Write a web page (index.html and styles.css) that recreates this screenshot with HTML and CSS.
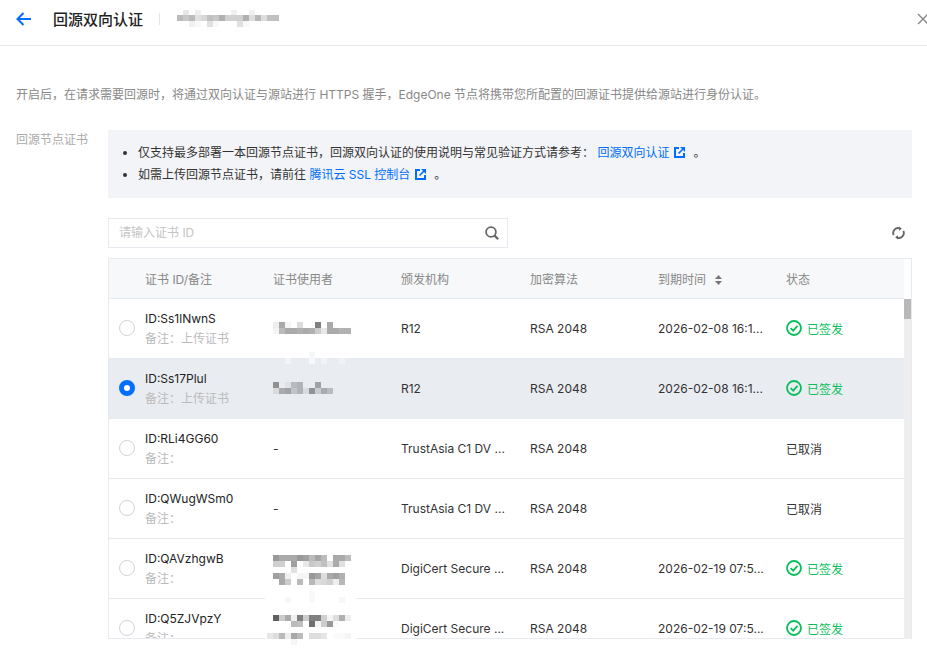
FILE: index.html
```html
<!DOCTYPE html>
<html lang="zh-CN">
<head>
  <meta charset="UTF-8" />
  <meta name="viewport" content="width=device-width, initial-scale=1" />
  <title>回源双向认证</title>
  <link rel="stylesheet" href="styles.css">
</head>
<body>

  <header class="top-bar">
    <svg class="back-icon" width="16" height="14" viewBox="0 0 16 14" fill="none" stroke="#006eff" stroke-width="2">
      <path d="M15 7H2M7.5 1 1.5 7l6 6"/>
    </svg>
    <h1 class="page-title">回源双向认证</h1>
    <span class="title-divider"></span>
    <!-- 打码的域名 -->
    <svg class="title-mosaic" width="102" height="18" viewBox="0 0 102 18" shape-rendering="crispEdges">
      <rect x="6" y="0" width="6" height="6" fill="#e8e8e8"/><rect x="18" y="0" width="6" height="6" fill="#eee"/><rect x="54" y="0" width="6" height="6" fill="#f0f0f0"/><rect x="72" y="0" width="6" height="6" fill="#f0f0f0"/>
      <rect x="0" y="5" width="6" height="6" fill="#bbb"/><rect x="6" y="5" width="6" height="6" fill="#c8c8c8"/><rect x="12" y="5" width="6" height="6" fill="#bbb"/><rect x="18" y="5" width="6" height="6" fill="#e0e0e0"/><rect x="24" y="5" width="6" height="6" fill="#d8d8d8"/><rect x="30" y="5" width="6" height="6" fill="#c0c0c0"/><rect x="36" y="5" width="6" height="6" fill="#c8c8c8"/><rect x="42" y="5" width="6" height="6" fill="#b0b0b0"/><rect x="48" y="5" width="18" height="6" fill="#d0d0d0"/><rect x="66" y="5" width="6" height="6" fill="#b0b0b0"/><rect x="72" y="5" width="6" height="6" fill="#ddd"/><rect x="78" y="5" width="6" height="6" fill="#b8b8b8"/><rect x="84" y="5" width="6" height="6" fill="#ddd"/><rect x="90" y="5" width="12" height="6" fill="#c0c0c0"/>
      <rect x="12" y="11" width="6" height="6" fill="#f0f0f0"/><rect x="18" y="11" width="6" height="6" fill="#f8f8f8"/><rect x="30" y="11" width="6" height="6" fill="#e0e0e0"/><rect x="36" y="11" width="6" height="6" fill="#f8f8f8"/><rect x="60" y="11" width="6" height="6" fill="#e0e0e0"/><rect x="66" y="11" width="6" height="6" fill="#f8f8f8"/>
    </svg>
    <svg class="close-icon" width="12" height="12" viewBox="0 0 12 12" fill="none" stroke="#888" stroke-width="1.4">
      <path d="M1 1l10 10M11 1 1 11"/>
    </svg>
  </header>

  <main class="content">
    <p class="intro">开启后，在请求需要回源时，将通过双向认证与源站进行 HTTPS 握手，EdgeOne 节点将携带您所配置的回源证书提供给源站进行身份认证。</p>

    <div class="form-row">
      <label class="form-label">回源节点证书</label>
      <div class="form-body">

        <ul class="notice">
          <li>仅支持最多部署一本回源节点证书，回源双向认证的使用说明与常见验证方式请参考：
            <a class="link" href="#">回源双向认证<svg class="ext-icon" width="11" height="11" viewBox="0 0 11 11" fill="none" stroke="#006eff" stroke-width="2"><path d="M5 1H1v9h9V6"/><path d="M4.5 6.5 9 2" stroke-width="1.6"/><path d="M6 0h5v5z" fill="#006eff" stroke="none"/></svg></a><span class="after-link">。</span></li>
          <li>如需上传回源节点证书，请前往
            <a class="link" href="#">腾讯云 SSL 控制台<svg class="ext-icon" width="11" height="11" viewBox="0 0 11 11" fill="none" stroke="#006eff" stroke-width="2"><path d="M5 1H1v9h9V6"/><path d="M4.5 6.5 9 2" stroke-width="1.6"/><path d="M6 0h5v5z" fill="#006eff" stroke="none"/></svg></a><span class="after-link">。</span></li>
        </ul>

        <div class="toolbar">
          <div class="search-box">
            <input class="search-input" type="text" placeholder="请输入证书 ID" />
            <svg width="14" height="14" viewBox="0 0 14 14" fill="none" stroke="#666" stroke-width="1.8">
              <circle cx="6" cy="6" r="4.9"/><path d="M9.6 9.6 13.2 13.2" stroke-width="2.2"/>
            </svg>
          </div>
          <svg class="refresh-icon" width="13" height="14" viewBox="0 0 14 14" fill="none" stroke="#666" stroke-width="2">
            <path d="M1.8 9.2A5.3 5.3 0 0 1 8.4 2"/><path d="M12.2 4.8A5.3 5.3 0 0 1 5.6 12"/>
            <path d="M7.6 0l3 2.3-3 2.3z" fill="#666" stroke="none"/><path d="M6.4 14l-3-2.3 3-2.3z" fill="#666" stroke="none"/>
          </svg>
        </div>

        <div class="cert-table">
          <div class="cert-scroll">
            <table>
              <colgroup>
                <col class="col-radio"><col class="col-id"><col class="col-user"><col class="col-issuer"><col class="col-algo"><col class="col-date"><col class="col-status">
              </colgroup>
              <thead>
                <tr>
                  <th></th>
                  <th>证书 ID/备注</th>
                  <th>证书使用者</th>
                  <th>颁发机构</th>
                  <th>加密算法</th>
                  <th>到期时间<svg class="sort-icon" width="7" height="10" viewBox="0 0 7 10" fill="#777"><path d="M3.5 0 7 4H0zM3.5 10 0 6h7z"/></svg></th>
                  <th>状态</th>
                </tr>
              </thead>
              <tbody>
                <tr>
                  <td><span class="radio"></span></td>
                  <td><div class="cert-id">ID:Ss1lNwnS</div><div class="cert-note">备注：上传证书</div></td>
                  <td></td>
                  <td>R12</td>
                  <td>RSA 2048</td>
                  <td>2026-02-08 16:1...</td>
                  <td><span class="status-ok"><svg width="16" height="16" viewBox="0 0 16 16" fill="none" stroke="#0abf5b" stroke-width="1.8"><circle cx="8" cy="8" r="7"/><path d="M4.6 8.1 7.2 10.6 11.5 5.8"/></svg>已签发</span></td>
                </tr>
                <tr class="selected">
                  <td><span class="radio checked"></span></td>
                  <td><div class="cert-id">ID:Ss17Plul</div><div class="cert-note">备注：上传证书</div></td>
                  <td></td>
                  <td>R12</td>
                  <td>RSA 2048</td>
                  <td>2026-02-08 16:1...</td>
                  <td><span class="status-ok"><svg width="16" height="16" viewBox="0 0 16 16" fill="none" stroke="#0abf5b" stroke-width="1.8"><circle cx="8" cy="8" r="7"/><path d="M4.6 8.1 7.2 10.6 11.5 5.8"/></svg>已签发</span></td>
                </tr>
                <tr>
                  <td><span class="radio"></span></td>
                  <td><div class="cert-id">ID:RLi4GG60</div><div class="cert-note">备注：</div></td>
                  <td>-</td>
                  <td>TrustAsia C1 DV ...</td>
                  <td>RSA 2048</td>
                  <td></td>
                  <td>已取消</td>
                </tr>
                <tr>
                  <td><span class="radio"></span></td>
                  <td><div class="cert-id">ID:QWugWSm0</div><div class="cert-note">备注：</div></td>
                  <td>-</td>
                  <td>TrustAsia C1 DV ...</td>
                  <td>RSA 2048</td>
                  <td></td>
                  <td>已取消</td>
                </tr>
                <tr>
                  <td><span class="radio"></span></td>
                  <td><div class="cert-id">ID:QAVzhgwB</div><div class="cert-note">备注：</div></td>
                  <td></td>
                  <td>DigiCert Secure ...</td>
                  <td>RSA 2048</td>
                  <td>2026-02-19 07:5...</td>
                  <td><span class="status-ok"><svg width="16" height="16" viewBox="0 0 16 16" fill="none" stroke="#0abf5b" stroke-width="1.8"><circle cx="8" cy="8" r="7"/><path d="M4.6 8.1 7.2 10.6 11.5 5.8"/></svg>已签发</span></td>
                </tr>
                <tr>
                  <td><span class="radio"></span></td>
                  <td><div class="cert-id">ID:Q5ZJVpzY</div><div class="cert-note">备注：</div></td>
                  <td></td>
                  <td>DigiCert Secure ...</td>
                  <td>RSA 2048</td>
                  <td>2026-02-19 07:5...</td>
                  <td><span class="status-ok"><svg width="16" height="16" viewBox="0 0 16 16" fill="none" stroke="#0abf5b" stroke-width="1.8"><circle cx="8" cy="8" r="7"/><path d="M4.6 8.1 7.2 10.6 11.5 5.8"/></svg>已签发</span></td>
                </tr>
              </tbody>
            </table>
          </div>
          <div class="scrollbar"><div class="scrollbar-thumb"></div></div>

          <!-- 证书使用者一列的打码，盖在表格上面。x = 页面x - 265, y = 页面y - 300 -->
          <svg class="user-mosaic" width="92" height="350" viewBox="0 0 92 350" shape-rendering="crispEdges">
            <g>
              <rect x="8" y="22" width="6" height="6" fill="#eee"/><rect x="14" y="22" width="6" height="6" fill="#aaa"/><rect x="20" y="22" width="6" height="6" fill="#f5f5f5"/><rect x="32" y="22" width="6" height="6" fill="#ddd"/><rect x="50" y="22" width="6" height="6" fill="#808080"/><rect x="62" y="22" width="6" height="6" fill="#aaa"/>
              <rect x="8" y="28" width="6" height="6" fill="#f5f5f5"/><rect x="14" y="28" width="6" height="6" fill="#bbb"/><rect x="20" y="28" width="12" height="6" fill="#aaa"/><rect x="32" y="28" width="6" height="6" fill="#b0b0b0"/><rect x="38" y="28" width="6" height="6" fill="#aaa"/><rect x="44" y="28" width="6" height="6" fill="#b0b0b0"/><rect x="50" y="28" width="6" height="6" fill="#ccc"/><rect x="56" y="28" width="6" height="6" fill="#e8e8e8"/><rect x="62" y="28" width="12" height="6" fill="#aaa"/><rect x="74" y="28" width="12" height="6" fill="#b2b2b2"/>
            </g>
            <g>
              <rect x="44" y="52" width="6" height="12" fill="#f6f7f9"/><rect x="20" y="58" width="6" height="6" fill="#f4f5f8"/><rect x="56" y="58" width="6" height="6" fill="#f0f2f5"/><rect x="74" y="58" width="6" height="6" fill="#f0f2f5"/>
              <rect x="8" y="82" width="6" height="6" fill="#909090"/><rect x="20" y="82" width="6" height="6" fill="#dfe1e6"/><rect x="26" y="82" width="6" height="6" fill="#b8bcc0"/><rect x="32" y="82" width="6" height="6" fill="#b0b3b8"/><rect x="50" y="82" width="6" height="6" fill="#a0a0a5"/>
              <rect x="8" y="88" width="6" height="6" fill="#d8dade"/><rect x="14" y="88" width="6" height="6" fill="#a8abb0"/><rect x="20" y="88" width="6" height="6" fill="#a0a3a8"/><rect x="26" y="88" width="6" height="6" fill="#c0c3c8"/><rect x="32" y="88" width="6" height="6" fill="#b0b3b8"/><rect x="38" y="88" width="6" height="6" fill="#d8dade"/><rect x="44" y="88" width="6" height="6" fill="#90939a"/><rect x="50" y="88" width="6" height="6" fill="#c8cbd0"/><rect x="56" y="88" width="6" height="6" fill="#a8abb0"/><rect x="62" y="88" width="6" height="6" fill="#b8bbc0"/>
            </g>
            <g>
              <rect x="8" y="255" width="6" height="6" fill="#999"/><rect x="14" y="255" width="18" height="6" fill="#aaa"/><rect x="32" y="255" width="6" height="6" fill="#999"/><rect x="38" y="255" width="6" height="6" fill="#a0a0a0"/><rect x="44" y="255" width="6" height="6" fill="#bbb"/><rect x="50" y="255" width="6" height="6" fill="#a5a5a5"/><rect x="56" y="255" width="6" height="6" fill="#bbb"/><rect x="68" y="255" width="12" height="6" fill="#aaa"/><rect x="80" y="255" width="6" height="6" fill="#bbb"/>
              <rect x="8" y="261" width="12" height="6" fill="#d0d0d0"/><rect x="26" y="261" width="6" height="6" fill="#a0a0a0"/><rect x="38" y="261" width="6" height="6" fill="#e8e8e8"/><rect x="44" y="261" width="6" height="6" fill="#c8c8c8"/><rect x="50" y="261" width="6" height="6" fill="#d0d0d0"/><rect x="56" y="261" width="6" height="6" fill="#c0c0c0"/><rect x="62" y="261" width="6" height="6" fill="#e0e0e0"/><rect x="68" y="261" width="6" height="6" fill="#aaa"/><rect x="74" y="261" width="6" height="6" fill="#e0e0e0"/>
              <rect x="26" y="267" width="6" height="6" fill="#e0e0e0"/>
              <rect x="8" y="273" width="6" height="6" fill="#a0a0a0"/><rect x="14" y="273" width="6" height="6" fill="#aaa"/><rect x="20" y="273" width="6" height="6" fill="#f0f0f0"/><rect x="32" y="273" width="12" height="6" fill="#f6f6f6"/><rect x="44" y="273" width="6" height="6" fill="#999"/><rect x="50" y="273" width="6" height="6" fill="#a5a5a5"/><rect x="56" y="273" width="6" height="6" fill="#ddd"/><rect x="62" y="273" width="6" height="6" fill="#aaa"/><rect x="68" y="273" width="6" height="6" fill="#a0a0a0"/><rect x="74" y="273" width="6" height="6" fill="#b0b0b0"/>
              <rect x="14" y="279" width="6" height="6" fill="#aaa"/><rect x="20" y="279" width="6" height="6" fill="#ccc"/><rect x="32" y="279" width="6" height="6" fill="#bbb"/><rect x="44" y="279" width="6" height="6" fill="#b8b8b8"/><rect x="50" y="279" width="6" height="6" fill="#ddd"/><rect x="56" y="279" width="6" height="6" fill="#d8d8d8"/><rect x="62" y="279" width="6" height="6" fill="#d0d0d0"/><rect x="68" y="279" width="6" height="6" fill="#eee"/><rect x="74" y="279" width="6" height="6" fill="#b8b8b8"/>
            </g>
            <g>
              <rect x="0" y="297" width="91" height="6" fill="#fff"/><rect x="44" y="291" width="6" height="12" fill="#f8f9fb"/><rect x="20" y="297" width="6" height="6" fill="#f6f7f9"/><rect x="74" y="297" width="6" height="6" fill="#f6f7f9"/>
              <rect x="8" y="315" width="6" height="6" fill="#606060"/><rect x="14" y="315" width="6" height="6" fill="#ccc"/><rect x="20" y="315" width="6" height="6" fill="#aaa"/><rect x="26" y="315" width="6" height="6" fill="#f0f0f0"/><rect x="32" y="315" width="6" height="6" fill="#808080"/><rect x="38" y="315" width="6" height="6" fill="#ccc"/><rect x="44" y="315" width="12" height="6" fill="#808080"/><rect x="56" y="315" width="6" height="6" fill="#d0d0d0"/><rect x="62" y="315" width="6" height="6" fill="#f5f5f5"/><rect x="68" y="315" width="6" height="6" fill="#ddd"/><rect x="74" y="315" width="6" height="6" fill="#b0b0b0"/><rect x="80" y="315" width="6" height="6" fill="#eee"/>
              <rect x="26" y="321" width="6" height="6" fill="#bbb"/><rect x="32" y="321" width="6" height="6" fill="#c0c0c0"/><rect x="44" y="321" width="6" height="6" fill="#707070"/><rect x="50" y="321" width="6" height="6" fill="#f5f5f5"/><rect x="56" y="321" width="6" height="6" fill="#ccc"/><rect x="62" y="321" width="6" height="6" fill="#999"/><rect x="68" y="321" width="6" height="6" fill="#fafafa"/>
              <rect x="0" y="333" width="91" height="6" fill="#fff"/>
              <rect x="2" y="333" width="6" height="6" fill="#e8e8e8"/><rect x="8" y="333" width="6" height="6" fill="#ddd"/><rect x="14" y="333" width="6" height="6" fill="#bbb"/><rect x="20" y="333" width="6" height="6" fill="#eee"/><rect x="26" y="333" width="6" height="6" fill="#a8a8a8"/><rect x="32" y="333" width="6" height="6" fill="#bbb"/><rect x="44" y="333" width="12" height="6" fill="#ddd"/><rect x="56" y="333" width="6" height="6" fill="#e5e5e5"/><rect x="68" y="333" width="12" height="6" fill="#fafafa"/><rect x="80" y="333" width="6" height="6" fill="#f5f5f5"/>
              <rect x="26" y="339" width="6" height="6" fill="#f5f5f8"/>
            </g>
          </svg>
        </div>

      </div>
    </div>
  </main>

</body>
</html>
```

FILE: styles.css
```css
:root {
  --blue: #006eff;
  --green: #0abf5b;
  --line: #e7eaef;
  --text: #333;
  --muted: #888;
  --light: #bbb;
}
* {
  box-sizing: border-box;
}
html, body {
  height: 100%;
  overflow: hidden;
}
body {
  margin: 0;
  font-family: Inter, "Noto Sans CJK SC", sans-serif;
  font-size: 12px;
  color: var(--text);
  background: #fff;
}

/* top bar */
.top-bar {
  height: 46px;
  display: flex;
  align-items: center;
  padding: 0 0 8px 16px;
  border-bottom: 1px solid var(--line);
}
.back-icon {
  margin-right: 21px;
}
.page-title {
  margin: 0;
  font-size: 15px;
  font-weight: 500;
  color: #222;
}
.title-divider {
  width: 1px;
  height: 12px;
  margin: 0 17px 0 16px;
  background: #e5e5e5;
}
.close-icon {
  margin-left: auto;
  margin-right: -2px;
}

/* content */
.content {
  padding: 40px 15px 0 16px;
}
.intro {
  margin: 0;
  line-height: 18px;
  color: var(--muted);
}
.form-row {
  display: flex;
  margin-top: 26px;
}
.form-label {
  width: 92px;
  flex-shrink: 0;
  padding-top: 1px;
  line-height: 18px;
  color: #aaa;
}
.form-body {
  flex: 1;
  min-width: 0;
}

.notice {
  margin: 0;
  padding: 12px 20px 12px 30px;
  background: #f3f4f7;
  line-height: 22px;
  color: #333;
}
.link {
  color: var(--blue);
  text-decoration: none;
}
.ext-icon {
  margin-left: 5px;
  vertical-align: -1px;
}
.after-link {
  margin-left: 8px;
}

/* search */
.toolbar {
  display: flex;
  align-items: center;
  justify-content: space-between;
  margin-top: 20px;
  padding-right: 7px;
}
.search-box {
  width: 400px;
  height: 30px;
  display: flex;
  align-items: center;
  padding: 0 8px 0 11px;
  border: 1px solid var(--line);
}
.search-input {
  flex: 1;
  min-width: 0;
  padding: 0 0 1px;
  margin-left: -1px;
  border: 0;
  outline: 0;
  font: inherit;
}
.search-input::placeholder {
  color: #c4c4c4;
}

/* table */
.cert-table {
  position: relative;
  display: flex;
  height: 381px;
  margin-top: 10px;
  border: 1px solid var(--line);
}
.cert-scroll {
  flex: 1;
  min-width: 0;
  overflow: hidden;
}
.scrollbar {
  width: 7px;
  flex-shrink: 0;
  padding-top: 40px;
}
.scrollbar-thumb {
  height: 20px;
  background: #b8b8b8;
}
.scrollbar::after {
  content: "";
  display: block;
  height: 320px;
  background: #eee;
}
table {
  width: 100%;
  border-collapse: collapse;
  table-layout: fixed;
}
.col-radio { width: 28px; }
.col-id { width: 128px; }
.col-user { width: 128px; }
.col-issuer { width: 129px; }
.col-algo { width: 128px; }
.col-date { width: 128px; }
th, td {
  padding: 0 8px;
  text-align: left;
  white-space: nowrap;
  font-weight: 400;
}
th {
  height: 39px;
  background: #f7f8fa;
  color: var(--muted);
  border-bottom: 1px solid var(--line);
}
td {
  height: 60px;
  border-bottom: 1px solid var(--line);
}
td:first-child {
  padding: 0 0 0 10px;
}
tr.selected td {
  background: #e9ecf1;
}
.sort-icon {
  margin-left: 9px;
  vertical-align: -1px;
}
.radio {
  display: block;
  width: 16px;
  height: 16px;
  border: 1px solid #cfd5de;
  border-radius: 50%;
  background: #fff;
}
.radio.checked {
  border: 5px solid var(--blue);
}
.cert-id {
  margin-top: 2px;
  line-height: 20px;
  color: #222;
}
.cert-note {
  line-height: 20px;
  color: var(--light);
}
.status-ok {
  display: flex;
  align-items: center;
  gap: 5px;
  color: var(--green);
}
.user-mosaic {
  position: absolute;
  left: 156px;
  top: 41px;
  pointer-events: none;
}
```
